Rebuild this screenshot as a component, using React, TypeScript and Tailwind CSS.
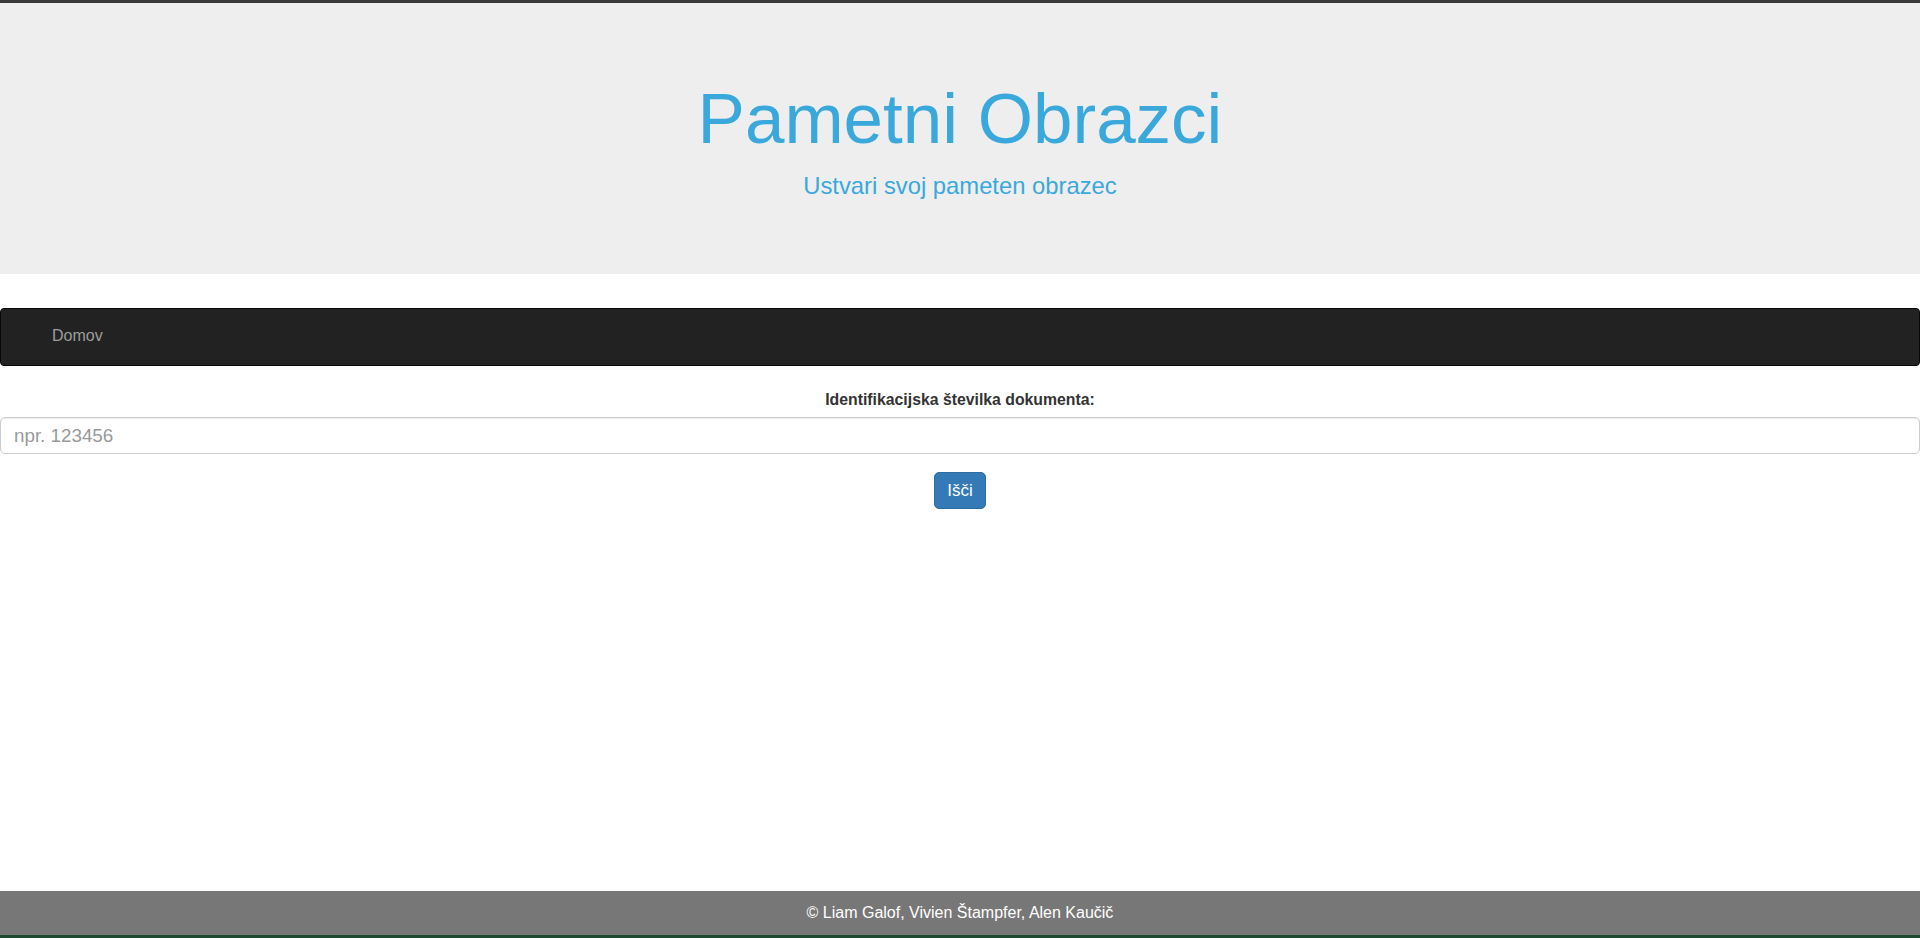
export default function App() {
  return (
    <div
      className="min-h-screen flex flex-col bg-white text-[#333]"
      style={{ fontFamily: '"Liberation Sans", Arial, sans-serif' }}
    >
      <div className="h-[3px] bg-[#393a3c]" />

      <header className="bg-[#eeeeee] h-[271px] flex flex-col items-center pt-[80px] text-[#3aa8db]">
        <h1 className="text-[71px] leading-[71px] font-normal">Pametni Obrazci</h1>
        <p className="mt-[20px] text-[23.8px] leading-[24px]">Ustvari svoj pameten obrazec</p>
      </header>

      <nav className="mt-[34px] h-[58px] bg-[#222] border border-[#080808] rounded-[4px] flex items-center pl-[51px] pb-[2px]">
        <a href="#" className="text-[#9d9d9d] text-[16px]">
          Domov
        </a>
      </nav>

      <form className="flex flex-col items-center mt-[24px]" onSubmit={(e) => e.preventDefault()}>
        <label className="font-bold text-[15.8px] leading-[20px]">Identifikacijska številka dokumenta:</label>
        <input
          type="text"
          placeholder="npr. 123456"
          className="mt-[7px] w-full h-[37px] px-[13px] text-[18.8px] border border-[#ccc] rounded-[5px] shadow-[inset_0_1px_1px_rgba(0,0,0,0.075)] placeholder:text-[#999] outline-none"
        />
        <button
          type="submit"
          className="mt-[18px] w-[52px] h-[37px] bg-[#337ab7] border border-[#2e6da4] rounded-[5px] text-white text-[17px]"
        >
          Išči
        </button>
      </form>

      <footer className="mt-auto">
        <div className="h-[44px] bg-[#777] text-white text-[16px] flex items-center justify-center">
          © Liam Galof, Vivien Štampfer, Alen Kaučič
        </div>
        <div className="h-[3px] bg-[#1d4a30]" />
      </footer>
    </div>
  );
}
